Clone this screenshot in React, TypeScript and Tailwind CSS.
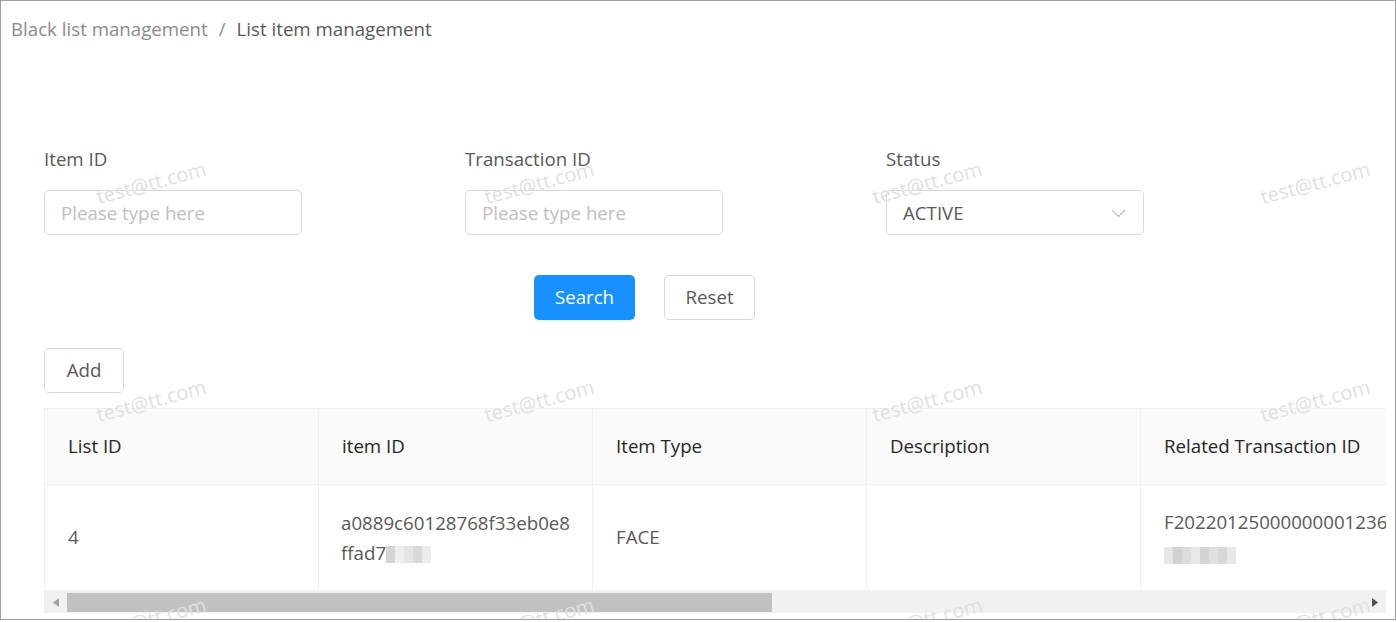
import { ReactNode } from "react";

const columns = ["List ID", "item ID", "Item Type", "Description", "Related Transaction ID"];

function Blur({ cells }: { cells: string[] }) {
  // pixelated masking blocks shown in the screenshot
  return (
    <span className="inline-flex h-[17px] align-middle">
      {cells.map((c, i) => (
        <span key={i} className={`h-full w-[9px] ${c}`} />
      ))}
    </span>
  );
}

function Field({ label, children }: { label: string; children: ReactNode }) {
  return (
    <div className="flex w-[421px] flex-col">
      <div className="h-[31px] leading-[31px] text-[#595959]">{label}</div>
      <div className="mt-[16px]">{children}</div>
    </div>
  );
}

function TextInput() {
  return (
    <div className="flex h-[45px] w-[258px] items-center rounded-[5px] border border-[#d9d9d9] px-[16px] pt-[2px] text-[#bfbfbf]">
      Please type here
    </div>
  );
}

function Watermarks() {
  const items = Array.from({ length: 12 });
  return (
    <div className="pointer-events-none absolute inset-0 overflow-hidden">
      <div className="ml-[-44px] mt-[73px] grid grid-cols-[repeat(4,388px)] auto-rows-[218px]">
        {items.map((_, i) => (
          <div key={i} className="flex items-center justify-center">
            <span className="-rotate-[15deg] text-[20px] text-[#e0e0e0]">test@tt.com</span>
          </div>
        ))}
      </div>
    </div>
  );
}

export default function App() {
  return (
    <div className="relative h-[620px] w-[1396px] overflow-hidden border border-[#a0a0a0] bg-white font-['Open_Sans','Noto_Sans',sans-serif] text-[18.7px]">
      <div className="flex h-[56px] items-center gap-[11px] pl-[10px]">
        <span className="text-[#8c8c8c]">Black list management</span>
        <span className="text-[#8c8c8c]">/</span>
        <span className="text-[#595959]">List item management</span>
      </div>

      <div className="pl-[43px] pr-[9px] pt-[86px]">
        <div className="flex">
          <Field label="Item ID">
            <TextInput />
          </Field>
          <Field label="Transaction ID">
            <TextInput />
          </Field>
          <Field label="Status">
            <div className="flex h-[45px] w-[258px] items-center justify-between rounded-[5px] border border-[#d9d9d9] pl-[16px] pr-[17px] pt-[2px] text-[#595959]">
              <span>ACTIVE</span>
              <svg width="15" height="9" viewBox="0 0 15 9" fill="none">
                <polyline points="1,1 7.5,7.5 14,1" stroke="#bfbfbf" strokeWidth="1.3" />
              </svg>
            </div>
          </Field>
        </div>

        <div className="mt-[40px] flex gap-[29px] pl-[490px]">
          <button className="h-[45px] w-[101px] rounded-[5px] bg-[#1890ff] text-white shadow-[0_2px_0_rgba(0,0,0,0.045)]">
            Search
          </button>
          <button className="h-[45px] w-[91px] rounded-[5px] border border-[#d9d9d9] bg-white text-[#595959]">
            Reset
          </button>
        </div>

        <button className="mt-[28px] h-[45px] w-[80px] rounded-[5px] border border-[#d9d9d9] bg-white text-[#595959]">
          Add
        </button>

        <div className="mt-[15px] overflow-hidden border-l border-t border-[#f0f0f0]">
          <div className="flex h-[76px] w-max bg-[#fafafa]">
            {columns.map((c) => (
              <div
                key={c}
                className="flex w-[274px] shrink-0 items-center border-b border-r border-[#f0f0f0] px-[23px] font-medium text-[#262626]"
              >
                {c}
              </div>
            ))}
          </div>
          <div className="flex h-[105px] w-max text-[#595959]">
            <div className="flex w-[274px] shrink-0 items-center border-r border-[#f0f0f0] px-[23px]">4</div>
            <div className="flex w-[274px] shrink-0 flex-col justify-center border-r border-[#f0f0f0] px-[22px] leading-[30px]">
              <span className="whitespace-nowrap">a0889c60128768f33eb0e8</span>
              <span className="whitespace-nowrap">
                ffad7
                <Blur cells={["bg-[#d4d4d4]", "bg-[#eeeeee]", "bg-[#e4e4e4]", "bg-[#d9d9d9]", "bg-[#ececec]"]} />
              </span>
            </div>
            <div className="flex w-[274px] shrink-0 items-center border-r border-[#f0f0f0] px-[23px]">FACE</div>
            <div className="flex w-[274px] shrink-0 items-center border-r border-[#f0f0f0] px-[23px]" />
            <div className="flex w-[274px] shrink-0 flex-col justify-center px-[23px] leading-[30px]">
              <span className="whitespace-nowrap">F20220125000000001236</span>
              <span className="mt-[2px]">
                <Blur
                  cells={[
                    "bg-[#e6e6e6]",
                    "bg-[#d2d2d2]",
                    "bg-[#dcdcdc]",
                    "bg-[#e8e8e8]",
                    "bg-[#d4d4d4]",
                    "bg-[#e0e0e0]",
                    "bg-[#d8d8d8]",
                    "bg-[#e8e8e8]",
                  ]}
                />
              </span>
            </div>
          </div>
          <div className="flex h-[23px] items-center border-t border-[#f0f0f0] bg-[#f1f1f1]">
            <div className="flex w-[22px] shrink-0 justify-center">
              <svg width="6" height="9" viewBox="0 0 6 9">
                <polygon points="6,0 0,4.5 6,9" fill="#a3a3a3" />
              </svg>
            </div>
            <div className="h-[19px] w-[705px] bg-[#c1c1c1]" />
            <div className="flex-1" />
            <div className="flex w-[22px] shrink-0 justify-center">
              <svg width="6" height="9" viewBox="0 0 6 9">
                <polygon points="0,0 6,4.5 0,9" fill="#505050" />
              </svg>
            </div>
          </div>
        </div>
      </div>

      <Watermarks />
    </div>
  );
}
